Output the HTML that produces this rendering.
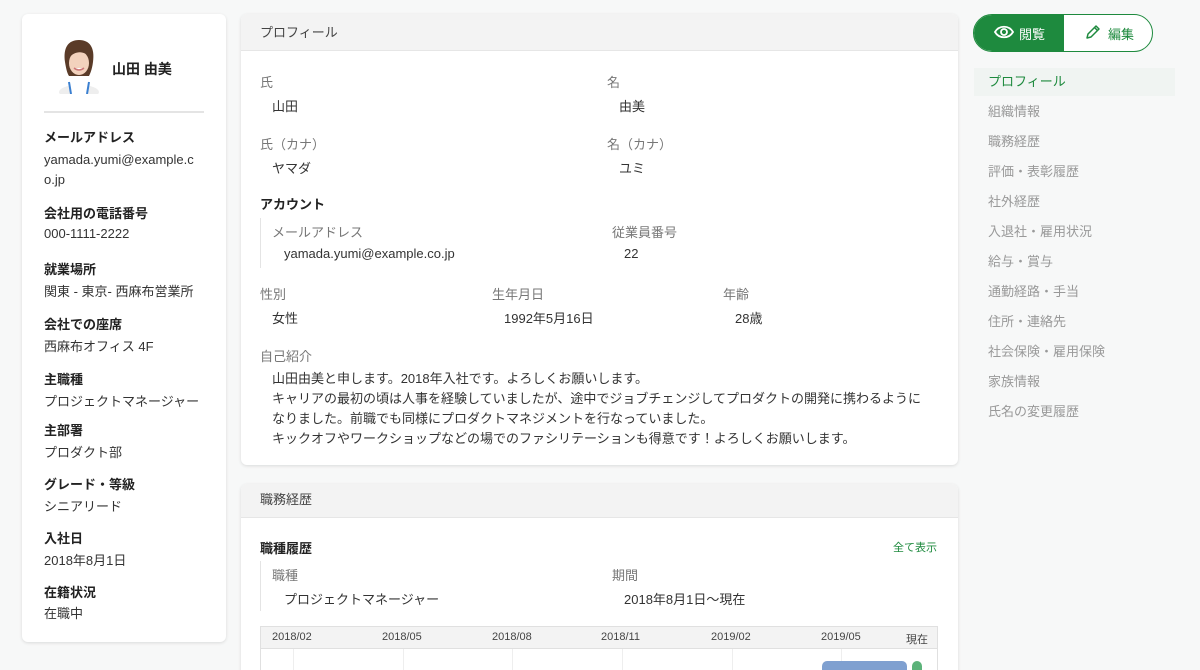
<!DOCTYPE html>
<html><head><meta charset="utf-8"><style>
*{box-sizing:border-box;margin:0;padding:0}
html,body{width:1200px;height:670px;overflow:hidden}
body{background:#f7f8f8;font-family:"Liberation Sans","Noto Sans CJK JP",sans-serif;color:#333;font-size:13px;position:relative}
.card{position:absolute;background:#fff;border-radius:6px;box-shadow:0 1px 3px rgba(0,0,0,.12)}
.abs{position:absolute;white-space:nowrap}
.lbl{color:#777;font-size:13px}
.val{color:#333;font-size:13px}
.b{font-weight:bold;color:#222}
.hd{position:absolute;left:0;right:0;top:0;background:#f3f3f3;border-bottom:1px solid #e6e6e6;border-radius:6px 6px 0 0;padding-left:19px;color:#444;font-size:13px}
.nav{position:absolute;left:974px;width:201px;height:28px;line-height:28px;padding-left:14px;color:#999;font-size:13px}
</style></head><body>
<div class="card" style="left:22px;top:14px;width:204px;height:628px">
 <svg class="abs" style="left:34px;top:22px" width="46" height="58" viewBox="0 0 46 58">
  <ellipse cx="23" cy="56" rx="20" ry="7" fill="#eee"/>
  <rect x="14" y="42" width="18" height="16" fill="#fff"/>
  <path d="M13 46 L15 58 M33 46 L31 58" stroke="#3a7fd0" stroke-width="2"/>
  <path d="M9 26 C7 12 12 4 23 4 C34 4 39 12 37 26 C36 34 34 38 33 40 L13 40 C11 37 10 32 9 26Z" fill="#5a3b28"/>
  <ellipse cx="23" cy="27" rx="10" ry="12" fill="#f3d2bd"/>
  <path d="M13 22 C15 12 30 11 33 21 C29 15 19 14 13 22Z" fill="#5a3b28"/>
  <path d="M18 32 Q23 36 28 32" stroke="#c77" stroke-width="1.5" fill="#fff"/>
 </svg>
 <div class="abs b" style="left:90px;top:45px;font-size:14px">山田 由美</div>
 <div class="abs" style="left:22px;top:97px;width:160px;height:2px;background:#e4e4e4"></div>
 <div class="abs b" style="left:22px;top:113px">メールアドレス</div>
 <div class="abs val" style="left:22px;top:136px;line-height:20px">yamada.yumi@example.c<br>o.jp</div>
 <div class="abs b" style="left:22px;top:189px">会社用の電話番号</div>
 <div class="abs val" style="left:22px;top:212px">000-1111-2222</div>
 <div class="abs b" style="left:22px;top:245px">就業場所</div>
 <div class="abs val" style="left:22px;top:267px">関東 - 東京- 西麻布営業所</div>
 <div class="abs b" style="left:22px;top:300px">会社での座席</div>
 <div class="abs val" style="left:22px;top:322px">西麻布オフィス 4F</div>
 <div class="abs b" style="left:22px;top:355px">主職種</div>
 <div class="abs val" style="left:22px;top:377px">プロジェクトマネージャー</div>
 <div class="abs b" style="left:22px;top:406px">主部署</div>
 <div class="abs val" style="left:22px;top:428px">プロダクト部</div>
 <div class="abs b" style="left:22px;top:460px">グレード・等級</div>
 <div class="abs val" style="left:22px;top:482px">シニアリード</div>
 <div class="abs b" style="left:22px;top:514px">入社日</div>
 <div class="abs val" style="left:22px;top:536px">2018年8月1日</div>
 <div class="abs b" style="left:22px;top:568px">在籍状況</div>
 <div class="abs val" style="left:22px;top:589px">在職中</div>
</div>

<div class="card" style="left:241px;top:14px;width:717px;height:451px">
 <div class="hd" style="height:37px;line-height:37px">プロフィール</div>
 <div class="abs lbl" style="left:19px;top:58px">氏</div>
 <div class="abs val" style="left:31px;top:82px">山田</div>
 <div class="abs lbl" style="left:366px;top:58px">名</div>
 <div class="abs val" style="left:378px;top:82px">由美</div>
 <div class="abs lbl" style="left:19px;top:120px">氏（カナ）</div>
 <div class="abs val" style="left:31px;top:144px">ヤマダ</div>
 <div class="abs lbl" style="left:366px;top:120px">名（カナ）</div>
 <div class="abs val" style="left:378px;top:144px">ユミ</div>
 <div class="abs b" style="left:19px;top:180px">アカウント</div>
 <div class="abs" style="left:19px;top:204px;width:1px;height:50px;background:#e4e4e4"></div>
 <div class="abs lbl" style="left:31px;top:208px">メールアドレス</div>
 <div class="abs val" style="left:43px;top:232px">yamada.yumi@example.co.jp</div>
 <div class="abs lbl" style="left:371px;top:208px">従業員番号</div>
 <div class="abs val" style="left:383px;top:232px">22</div>
 <div class="abs lbl" style="left:19px;top:270px">性別</div>
 <div class="abs val" style="left:31px;top:294px">女性</div>
 <div class="abs lbl" style="left:251px;top:270px">生年月日</div>
 <div class="abs val" style="left:263px;top:294px">1992年5月16日</div>
 <div class="abs lbl" style="left:482px;top:270px">年齢</div>
 <div class="abs val" style="left:494px;top:294px">28歳</div>
 <div class="abs lbl" style="left:19px;top:332px">自己紹介</div>
 <div class="abs val" style="left:31px;top:355px;line-height:20px">山田由美と申します。2018年入社です。よろしくお願いします。<br>キャリアの最初の頃は人事を経験していましたが、途中でジョブチェンジしてプロダクトの開発に携わるように<br>なりました。前職でも同様にプロダクトマネジメントを行なっていました。<br>キックオフやワークショップなどの場でのファシリテーションも得意です！よろしくお願いします。</div>
</div>

<div class="card" style="left:241px;top:484px;width:717px;height:200px">
 <div class="hd" style="height:34px;line-height:32px">職務経歴</div>
 <div class="abs b" style="left:19px;top:54px">職種履歴</div>
 <div class="abs" style="left:652px;top:55px;color:#1e8a3e;font-size:11px">全て表示</div>
 <div class="abs" style="left:19px;top:77px;width:1px;height:50px;background:#e4e4e4"></div>
 <div class="abs lbl" style="left:31px;top:81px">職種</div>
 <div class="abs val" style="left:43px;top:105px">プロジェクトマネージャー</div>
 <div class="abs lbl" style="left:371px;top:81px">期間</div>
 <div class="abs val" style="left:383px;top:105px">2018年8月1日〜現在</div>
 <div class="abs" style="left:19px;top:142px;width:678px;height:60px;border:1px solid #e0e0e0">
  <div class="abs" style="left:0;top:0;right:0;height:22px;background:#f3f3f3;border-bottom:1px solid #e0e0e0;font-size:11px;color:#444">
   <span class="abs" style="left:11px;top:4px">2018/02</span><span class="abs" style="left:121px;top:4px">2018/05</span><span class="abs" style="left:231px;top:4px">2018/08</span><span class="abs" style="left:340px;top:4px">2018/11</span><span class="abs" style="left:450px;top:4px">2019/02</span><span class="abs" style="left:560px;top:4px">2019/05</span><span class="abs" style="left:645px;top:4px">現在</span>
  </div>
  <div class="abs" style="left:32px;top:22px;width:1px;height:40px;background:#eee"></div>
  <div class="abs" style="left:142px;top:22px;width:1px;height:40px;background:#eee"></div>
  <div class="abs" style="left:251px;top:22px;width:1px;height:40px;background:#eee"></div>
  <div class="abs" style="left:361px;top:22px;width:1px;height:40px;background:#eee"></div>
  <div class="abs" style="left:471px;top:22px;width:1px;height:40px;background:#eee"></div>
  <div class="abs" style="left:580px;top:22px;width:1px;height:40px;background:#eee"></div>
  <div class="abs" style="left:561px;top:34px;width:85px;height:14px;background:#7fa0d0;border-radius:5px"></div>
  <div class="abs" style="left:651px;top:34px;width:10px;height:14px;background:#5cb37a;border-radius:5px"></div>
 </div>
</div>

<div class="abs" style="left:973px;top:14px;width:180px;height:38px;border:1.5px solid #1e8a3e;border-radius:19px;overflow:hidden;background:#fff">
 <div class="abs" style="left:0;top:0;width:90px;height:36px;background:#1e8a3e"></div>
 <svg class="abs" style="left:20px;top:9px" width="20" height="16" viewBox="0 0 20 16"><path d="M1 8 C5 1 15 1 19 8 C15 15 5 15 1 8Z" fill="none" stroke="#fff" stroke-width="1.8"/><circle cx="10" cy="8" r="3" fill="none" stroke="#fff" stroke-width="1.8"/></svg>
 <div class="abs" style="left:45px;top:9px;color:#fff;font-size:13px">閲覧</div>
 <svg class="abs" style="left:111px;top:9px" width="16" height="16" viewBox="0 0 16 16"><path d="M2 14 L3 10 L11 2 L14 5 L6 13 Z M9.5 3.5 L12.5 6.5" fill="none" stroke="#1e8a3e" stroke-width="1.5" stroke-linejoin="round"/></svg>
 <div class="abs" style="left:134px;top:9px;color:#1e8a3e;font-size:13px">編集</div>
</div>
<div class="nav" style="top:68px;background:#f0f4f2;color:#1e8a3e">プロフィール</div>
<div class="nav" style="top:98px">組織情報</div>
<div class="nav" style="top:128px">職務経歴</div>
<div class="nav" style="top:158px">評価・表彰履歴</div>
<div class="nav" style="top:188px">社外経歴</div>
<div class="nav" style="top:218px">入退社・雇用状況</div>
<div class="nav" style="top:248px">給与・賞与</div>
<div class="nav" style="top:278px">通勤経路・手当</div>
<div class="nav" style="top:308px">住所・連絡先</div>
<div class="nav" style="top:338px">社会保険・雇用保険</div>
<div class="nav" style="top:368px">家族情報</div>
<div class="nav" style="top:398px">氏名の変更履歴</div>
</body></html>
